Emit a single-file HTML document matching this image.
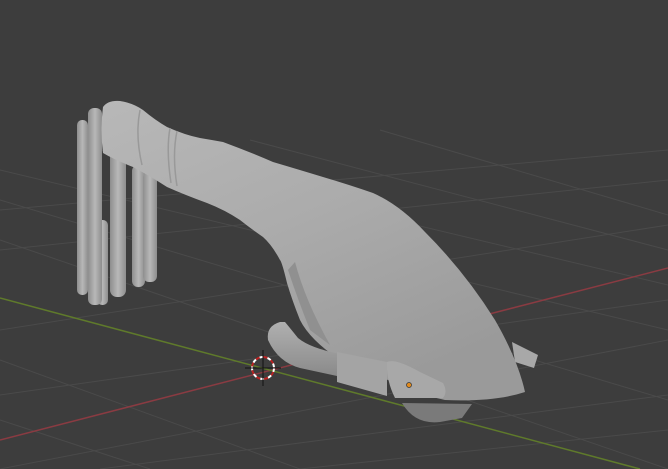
<!DOCTYPE html>
<html><head><style>html,body{margin:0;padding:0;background:#3d3d3d;overflow:hidden}svg{display:block}</style></head>
<body>
<svg width="668" height="469" viewBox="0 0 668 469" xmlns="http://www.w3.org/2000/svg">
<defs>
<linearGradient id="b" x1="0" y1="0" x2="0.6" y2="1">
<stop offset="0" stop-color="#b8b8b8"/><stop offset="0.5" stop-color="#ababab"/><stop offset="1" stop-color="#9a9a9a"/></linearGradient>
<linearGradient id="t" x1="0" y1="0" x2="1" y2="0">
<stop offset="0" stop-color="#8e8e8e"/><stop offset="0.5" stop-color="#b8b8b8"/><stop offset="1" stop-color="#8e8e8e"/></linearGradient>
<linearGradient id="tube" x1="0" y1="0" x2="0" y2="1">
<stop offset="0" stop-color="#b0b0b0"/><stop offset="1" stop-color="#8a8a8a"/></linearGradient>
</defs>
<rect width="668" height="469" fill="#3d3d3d"/>
<g stroke="#4a4a4a" stroke-width="1" fill="none">
<path d="M0 210 L668 150 M0 250 L668 180 M0 330 L668 225 M0 395 L668 300 M0 469 L668 340 M100 469 L668 395 M300 469 L668 430"/>
<path d="M0 240 L668 469 M0 200 L668 400 M0 170 L668 330 M100 150 L668 285 M250 140 L668 250 M380 130 L668 215 M0 360 L300 469 M0 420 L150 469"/>
</g>
<line x1="0" y1="440" x2="668" y2="268" stroke="#8a3b42" stroke-width="1.5"/>
<line x1="0" y1="298" x2="640" y2="469" stroke="#5f7a2b" stroke-width="1.5"/>
<g fill="url(#t)">
<rect x="97" y="220" width="11" height="85" rx="5"/>
<rect x="77" y="120" width="11" height="175" rx="5"/>
<rect x="88" y="108" width="14" height="197" rx="6"/>
<rect x="110" y="150" width="16" height="147" rx="7"/>
<rect x="132" y="165" width="13" height="122" rx="6"/>
<rect x="143" y="172" width="14" height="110" rx="6"/>
</g>
<path d="M512 342 L538 355 L534 368 L515 362 Z" fill="#a8a8a8"/>
<path d="M103 107 Q108 100 120 101 Q133 103 143 110 Q155 120 167 127 Q185 135 200 138 Q212 140 223 142 Q250 152 273 162 Q300 170 323 177 Q350 185 373 193 Q400 205 425 232 Q465 272 495 320 Q518 360 525 392 Q495 402 445 400 Q420 395 400 385 L340 360 Q310 340 300 320 Q292 300 287 283 Q282 262 280 260 Q272 245 263 237 Q250 228 240 220 Q225 210 207 203 Q185 195 167 187 Q150 176 133 167 Q115 160 103 153 Q100 130 103 107 Z" fill="url(#b)"/>
<path d="M140 110 Q135 135 142 165 M170 128 Q166 150 171 183 M177 131 Q172 155 177 186" stroke="#999" stroke-width="1.5" fill="none"/>
<path d="M288 270 Q298 300 310 330 L330 345 Q305 300 295 262 Z" fill="#909090"/>
<path d="M280 322 Q266 326 268 340 Q278 362 300 368 L337 376 L340 354 Q310 348 298 338 Q290 328 285 322 Z" fill="url(#tube)"/>
<path d="M337 352 L387 362 L387 396 L337 382 Z" fill="#a4a4a4"/>
<path d="M387 362 Q395 358 420 372 L443 383 Q448 392 443 398 L395 398 Q386 380 387 362 Z" fill="#a8a8a8"/>
<path d="M402 403 Q415 425 440 422 L462 418 L472 404 Z" fill="#7a7a7a"/>
<circle cx="409" cy="385" r="2.5" fill="#e08a1e" stroke="#333" stroke-width="0.7"/>
<circle cx="263" cy="368" r="11" fill="none" stroke="#fff" stroke-width="2" stroke-dasharray="4 4"/>
<circle cx="263" cy="368" r="11" fill="none" stroke="#b22" stroke-width="2" stroke-dasharray="4 4" stroke-dashoffset="4"/>
<path d="M263 350 V386 M245 368 H281" stroke="#111" stroke-width="1"/>
</svg>
</body></html>
